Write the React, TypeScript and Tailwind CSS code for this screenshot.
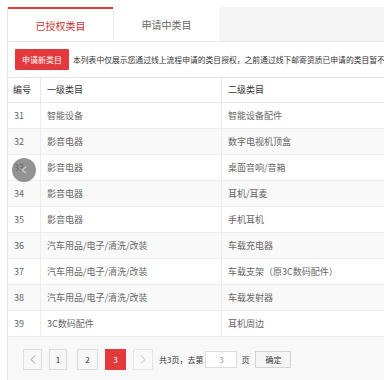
import React from "react";

const rows: [string, string, string][] = [
  ["31", "智能设备", "智能设备配件"],
  ["32", "影音电器", "数字电视机顶盒"],
  ["33", "影音电器", "桌面音响/音箱"],
  ["34", "影音电器", "耳机/耳麦"],
  ["35", "影音电器", "手机耳机"],
  ["36", "汽车用品/电子/清洗/改装", "车载充电器"],
  ["37", "汽车用品/电子/清洗/改装", "车载支架（原3C数码配件）"],
  ["38", "汽车用品/电子/清洗/改装", "车载发射器"],
  ["39", "3C数码配件", "耳机周边"],
];

export default function App() {
  return (
    <div
      className="relative w-[384px] h-[380px] overflow-hidden bg-white"
      style={{ fontFamily: '"Noto Sans CJK SC", "Liberation Sans", sans-serif' }}
    >
      <div className="pt-[7px] pl-[7px]">
        <div className="w-[377px] border-l border-[#e3e3e3]">
          {/* Tabs */}
          <div className="flex h-[35px] bg-[#f5f5f5] border-b border-[#e6e6e6]">
            <div className="w-[105px] bg-white border-t-2 border-[#e4393c] flex items-center justify-center text-[10px] text-[#c9302c]">
              已授权类目
            </div>
            <div className="w-[106px] bg-white border-l border-[#ececec] flex items-center justify-center text-[10px] text-[#666]">
              申请中类目
            </div>
          </div>
          {/* Notice */}
          <div className="flex items-center h-[36px] pl-[7px] gap-[4px] border-b border-[#e6e6e6] overflow-hidden">
            <div className="shrink-0 h-[21px] px-[7px] bg-[#e4393c] rounded-[1px] flex items-center text-[8px] text-white">
              申请新类目
            </div>
            <div className="text-[7.8px] text-[#333] whitespace-nowrap">
              本列表中仅展示您通过线上流程申请的类目授权，之前通过线下邮寄资质已申请的类目暂不
            </div>
          </div>
          {/* Table */}
          <div className="text-[9px] text-[#666]">
            <div className="flex h-[25px] border-b border-[#e8e8e8] text-[#333]">
              <div className="w-[33px] pl-[5px] flex items-center border-r border-[#e8e8e8]">编号</div>
              <div className="w-[181px] pl-[6px] flex items-center border-r border-[#e8e8e8]">一级类目</div>
              <div className="flex-1 pl-[6px] flex items-center">二级类目</div>
            </div>
            {rows.map((r, i) => (
              <div
                key={r[0]}
                className={
                  "flex h-[26px] border-b border-[#ececec] " +
                  (i % 2 === 1 ? "bg-[#f9f9f9]" : "bg-white")
                }
              >
                <div className="w-[33px] pl-[6px] flex items-center border-r border-[#ececec]">{r[0]}</div>
                <div className="w-[181px] pl-[6px] flex items-center border-r border-[#ececec]">{r[1]}</div>
                <div className="flex-1 pl-[6px] flex items-center">{r[2]}</div>
              </div>
            ))}
          </div>
          {/* Pagination */}
          <div className="h-[60px] bg-[#f8f8f8] pt-[12px] pl-[15px] flex items-start text-[8px] text-[#333]">
            <div className="w-[19px] h-[21px] border border-[#dcdcdc] bg-[#f7f7f7] flex items-center justify-center text-[#999]">
              <svg width="6" height="9" viewBox="0 0 6 9" fill="none">
                <path d="M5 0.5 L1 4.5 L5 8.5" stroke="#999" strokeWidth="1" />
              </svg>
            </div>
            <div className="ml-[7px] w-[18px] h-[21px] border border-[#dcdcdc] bg-[#f7f7f7] flex items-center justify-center">1</div>
            <div className="ml-[10px] w-[21px] h-[21px] border border-[#dcdcdc] bg-[#f7f7f7] flex items-center justify-center">2</div>
            <div className="ml-[7px] w-[21px] h-[21px] bg-[#e4393c] flex items-center justify-center text-white">3</div>
            <div className="ml-[7px] w-[20px] h-[21px] border border-[#e4e4e4] bg-[#f9f9f9] flex items-center justify-center">
              <svg width="6" height="9" viewBox="0 0 6 9" fill="none">
                <path d="M1 0.5 L5 4.5 L1 8.5" stroke="#bbb" strokeWidth="1" />
              </svg>
            </div>
            <div className="ml-[6px] h-[21px] flex items-center whitespace-nowrap">共3页，去第</div>
            <div className="ml-[2px] mt-[2px] w-[32px] h-[17px] border border-[#dcdcdc] bg-white flex items-center justify-center text-[#999]">3</div>
            <div className="ml-[4px] h-[21px] flex items-center">页</div>
            <div className="ml-[6px] mt-[2px] w-[36px] h-[17px] border border-[#d4d4d4] bg-[#f5f5f5] flex items-center justify-center">确定</div>
          </div>
        </div>
      </div>
      {/* touch overlay */}
      <div className="absolute left-[12px] top-[158px] w-[24px] h-[24px] rounded-full bg-[#6f6f6f]/75 flex items-center justify-center">
        <svg width="10" height="10" viewBox="0 0 10 10" fill="none">
          <path d="M7 2 L3 5 L7 8" stroke="#d0d0d0" strokeWidth="1.2" />
        </svg>
      </div>
    </div>
  );
}
